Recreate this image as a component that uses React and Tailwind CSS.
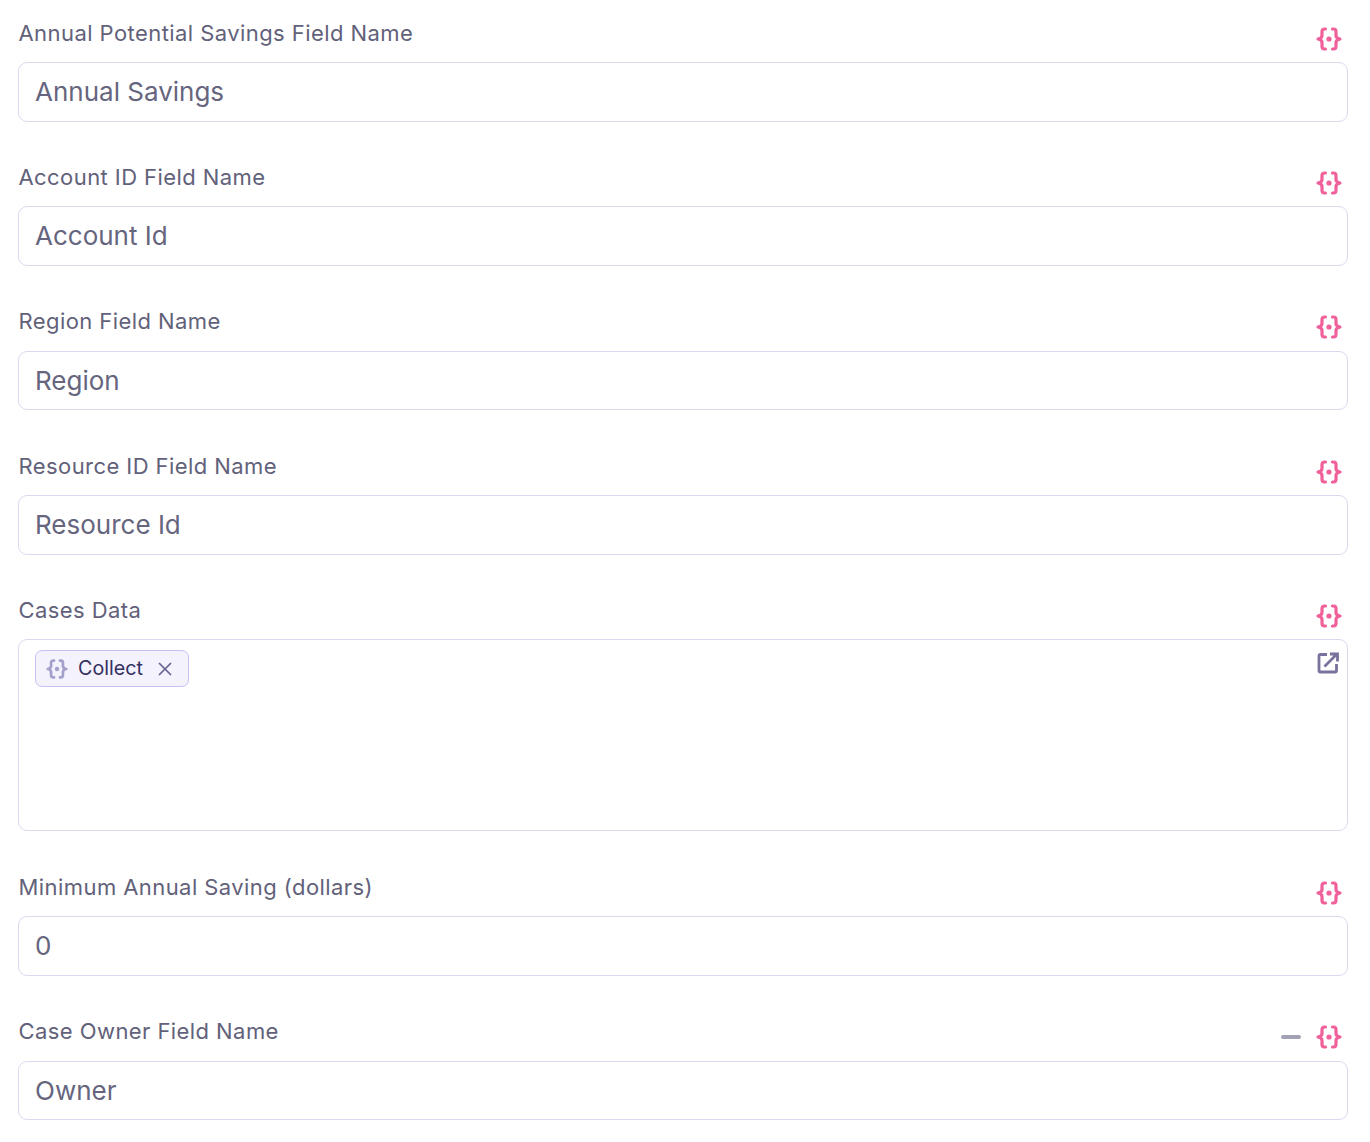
import React from 'react';
import { X } from 'lucide-react';

const BracesIcon = ({ className, weight = 3.2 }) => (
  <svg viewBox="0 0 26 26" fill="none" className={className}>
    <path
      d="M9.5 3H8.500a2.500 2.500 0 0 0-2.500 2.500v4c0 1.500-1 3-4 3.500 3 .5 4 2 4 3.500v4a2.500 2.500 0 0 0 2.500 2.500h1"
      stroke="currentColor"
      strokeWidth={weight}
      strokeLinecap="round"
      strokeLinejoin="round"
    />
    <path
      d="M16.500 3h1A2.500 2.500 0 0 1 20 5.500v4c0 1.500 1 3 4 3.500-3 .5-4 2-4 3.500v4a2.500 2.500 0 0 1-2.500 2.500h-1"
      stroke="currentColor"
      strokeWidth={weight}
      strokeLinecap="round"
      strokeLinejoin="round"
    />
    <circle cx="13" cy="13" r="2.600" fill="currentColor" />
  </svg>
);

const OpenIcon = () => (
  <svg viewBox="0 0 22 22" fill="none" className="w-[22px] h-[22px] text-[#77739c]">
    <path d="M10 2.500H3.500a1.500 1.500 0 0 0-1.500 1.500v14.500a1.500 1.500 0 0 0 1.500 1.500H18a1.500 1.500 0 0 0 1.500-1.500V12" stroke="currentColor" strokeWidth="2.800" strokeLinejoin="round" />
    <path d="M7.500 14.500 19.500 2.500M13 2h7.500v7.500" stroke="currentColor" strokeWidth="2.800" />
  </svg>
);

const FieldLabel = ({ label, collapse }) => (
  <div className="flex items-start justify-between h-[47px]">
    <label className="pl-[0.5px] text-[22px] leading-[30px] mt-[2.700px] text-[#62617a] tracking-[0.43px]">{label}</label>
    <div className="flex items-center mt-[10.600px] mr-[6px]">
      {collapse && <div className="w-[20px] h-[4px] rounded-full bg-[#a2a2b5] mr-[15px]" />}
      <BracesIcon className="w-[26px] h-[26px] text-[#f0609a]" />
    </div>
  </div>
);

const TextField = ({ label, value, collapse }) => (
  <div className="mb-[37.660px]">
    <FieldLabel label={label} collapse={collapse} />
    <div className="h-[59.670px] rounded-[9px] border border-[#dbd9ef] bg-white px-[16px] pb-[0.6px] flex items-center text-[26px] text-[#66657e]">
      {value}
    </div>
  </div>
);

const App = () => {
  return (
    <div className="w-[1370px] h-[1142px] bg-white pl-[18px] pr-[22px] pt-[15px] font-['Inter',sans-serif] overflow-hidden">
      <TextField label="Annual Potential Savings Field Name" value="Annual Savings" />
      <TextField label="Account ID Field Name" value="Account Id" />
      <TextField label="Region Field Name" value="Region" />
      <TextField label="Resource ID Field Name" value="Resource Id" />

      {/* Cases Data */}
      <div className="mb-[38px]">
        <FieldLabel label="Cases Data" />
        <div className="relative h-[192px] rounded-[9px] border border-[#dbd9ef] bg-white pl-[16px] pt-[10px]">
          <div className="inline-flex items-center h-[37px] w-[154px] rounded-[7px] border border-[#c5c2f3] bg-[#f3f2fd] pl-[10px] text-[19.700px] text-[#34305f]">
            <BracesIcon className="w-[22px] h-[22px] text-[#a3a0cb]" />
            <span className="ml-[10px]">Collect</span>
            <X className="ml-[11px] w-[22px] h-[22px] text-[#68648f]" strokeWidth={1.900} />
          </div>
          <div className="absolute top-[12px] right-[8px]">
            <OpenIcon />
          </div>
        </div>
      </div>

      <TextField label="Minimum Annual Saving (dollars)" value="0" />
      <TextField label="Case Owner Field Name" value="Owner" collapse />
    </div>
  );
};

export default App;
